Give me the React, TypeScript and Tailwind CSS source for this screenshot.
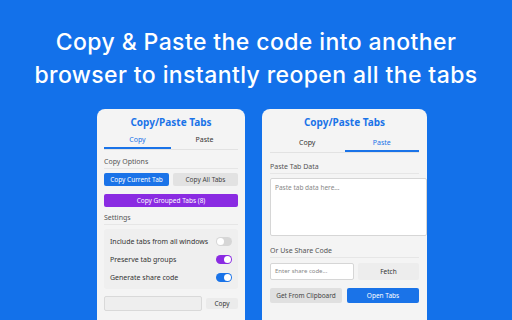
import React from "react";

const font = { fontFamily: '"Noto Sans", "Open Sans", sans-serif' };

function Toggle({ on, color }: { on: boolean; color?: string }) {
  return (
    <div
      className={`w-[16px] h-[9px] rounded-full flex items-center px-[1px] ${
        on ? "justify-end" : "justify-start bg-[#d6d6d6]"
      } ${color ?? ""}`}
    >
      <div className="w-[7px] h-[7px] rounded-full bg-white" />
    </div>
  );
}

function Header({ active, tall }: { active: "copy" | "paste"; tall?: boolean }) {
  const tab = tall ? "leading-[15px]" : "leading-[14px]";
  return (
    <>
      <div className="text-center text-[10px] leading-[14px] font-bold text-[#1a73e8]">Copy/Paste Tabs</div>
      <div className={`flex border-b border-[#e2e2e2] ${tall ? "mt-[6px]" : "mt-[4px]"}`}>
        <div
          className={`flex-1 text-center text-[7px] ${tab} ${
            active === "copy" ? "text-[#1a73e8] border-b-2 border-[#1a73e8]" : "text-[#333] border-b-2 border-transparent"
          }`}
        >
          Copy
        </div>
        <div
          className={`flex-1 text-center text-[7px] ${tab} ${
            active === "paste" ? "text-[#1a73e8] border-b-2 border-[#1a73e8]" : "text-[#333] border-b-2 border-transparent"
          }`}
        >
          Paste
        </div>
      </div>
    </>
  );
}

function SectionLabel({ children, className }: { children: React.ReactNode; className?: string }) {
  return (
    <div className={`text-[7px] leading-[11px] text-[#555] border-b border-[#e6e6e6] pb-[1px] ${className ?? ""}`}>
      {children}
    </div>
  );
}

function CopyPanel() {
  return (
    <div className="w-[148px] h-[230px] bg-[#f4f4f4] rounded-t-[8px] px-[7px] pt-[6px]" style={font}>
      <Header active="copy" />
      <SectionLabel className="mt-[6px]">Copy Options</SectionLabel>
      <div className="flex gap-[4px] mt-[4px]">
        <div className="flex-1 h-[13px] rounded-[2px] bg-[#1a73e8] text-white text-[6.5px] flex items-center justify-center">
          Copy Current Tab
        </div>
        <div className="flex-1 h-[13px] rounded-[2px] bg-[#e2e2e2] text-[#444] text-[6.5px] flex items-center justify-center">
          Copy All Tabs
        </div>
      </div>
      <div className="mt-[8px] h-[13px] rounded-[2px] bg-[#8a2be2] text-white text-[6.5px] flex items-center justify-center">
        Copy Grouped Tabs (8)
      </div>
      <SectionLabel className="mt-[5px]">Settings</SectionLabel>
      <div className="mt-[4px] h-[60px] bg-[#efefef] rounded-[3px] px-[6px] flex flex-col justify-center gap-[9px]">
        {[
          { t: "Include tabs from all windows", on: false, c: "" },
          { t: "Preserve tab groups", on: true, c: "bg-[#8a2be2]" },
          { t: "Generate share code", on: true, c: "bg-[#1a73e8]" },
        ].map((r) => (
          <div key={r.t} className="flex items-center justify-between">
            <span className="text-[7px] leading-[9px] text-[#333]">{r.t}</span>
            <Toggle on={r.on} color={r.c} />
          </div>
        ))}
      </div>
      <div className="flex items-center gap-[4px] mt-[7px]">
        <div className="flex-1 h-[15px] bg-[#eeeeee] border border-[#d9d9d9] rounded-[2px]" />
        <div className="w-[32px] h-[11px] bg-[#ebebeb] rounded-[2px] text-[6.5px] text-[#333] flex items-center justify-center">
          Copy
        </div>
      </div>
    </div>
  );
}

function PastePanel() {
  return (
    <div className="w-[165px] h-[230px] bg-[#f4f4f4] rounded-t-[8px] pl-[8px] pt-[6px]" style={font}>
      <div className="pr-[8px]">
        <Header active="paste" tall />
        <SectionLabel className="mt-[8px]">Paste Tab Data</SectionLabel>
      </div>
      <div className="mt-[4px] h-[58px] bg-white border border-[#d6d6d6] rounded-[2px] px-[4px] py-[4px] text-[6.5px] text-[#888]">
        Paste tab data here...
      </div>
      <div className="pr-[8px]">
        <SectionLabel className="mt-[9px]">Or Use Share Code</SectionLabel>
        <div className="flex gap-[4px] mt-[5px]">
          <div className="w-[84px] h-[17px] bg-white border border-[#d6d6d6] rounded-[2px] px-[4px] text-[6px] text-[#888] flex items-center">
            Enter share code...
          </div>
          <div className="flex-1 h-[17px] bg-[#ededed] rounded-[2px] text-[6.5px] text-[#333] flex items-center justify-center">
            Fetch
          </div>
        </div>
        <div className="flex gap-[5px] mt-[8px]">
          <div className="flex-1 h-[15px] bg-[#e0e0e0] rounded-[2px] text-[6.5px] text-[#444] flex items-center justify-center">
            Get From Clipboard
          </div>
          <div className="flex-1 h-[15px] bg-[#1a73e8] rounded-[2px] text-[6.5px] text-white flex items-center justify-center">
            Open Tabs
          </div>
        </div>
      </div>
    </div>
  );
}

export default function App() {
  return (
    <div className="w-[512px] h-[320px] overflow-hidden bg-[#1371ea]">
      <div
        className="pt-[26px] text-center text-white text-[23px] leading-[33px] font-medium tracking-[0.4px]"
        style={{ fontFamily: 'Inter, "Open Sans", sans-serif' }}
      >
        <div>Copy &amp; Paste the code into another</div>
        <div>browser to instantly reopen all the tabs</div>
      </div>
      <div className="flex gap-[17px] pl-[97px] mt-[17px]">
        <CopyPanel />
        <PastePanel />
      </div>
    </div>
  );
}
